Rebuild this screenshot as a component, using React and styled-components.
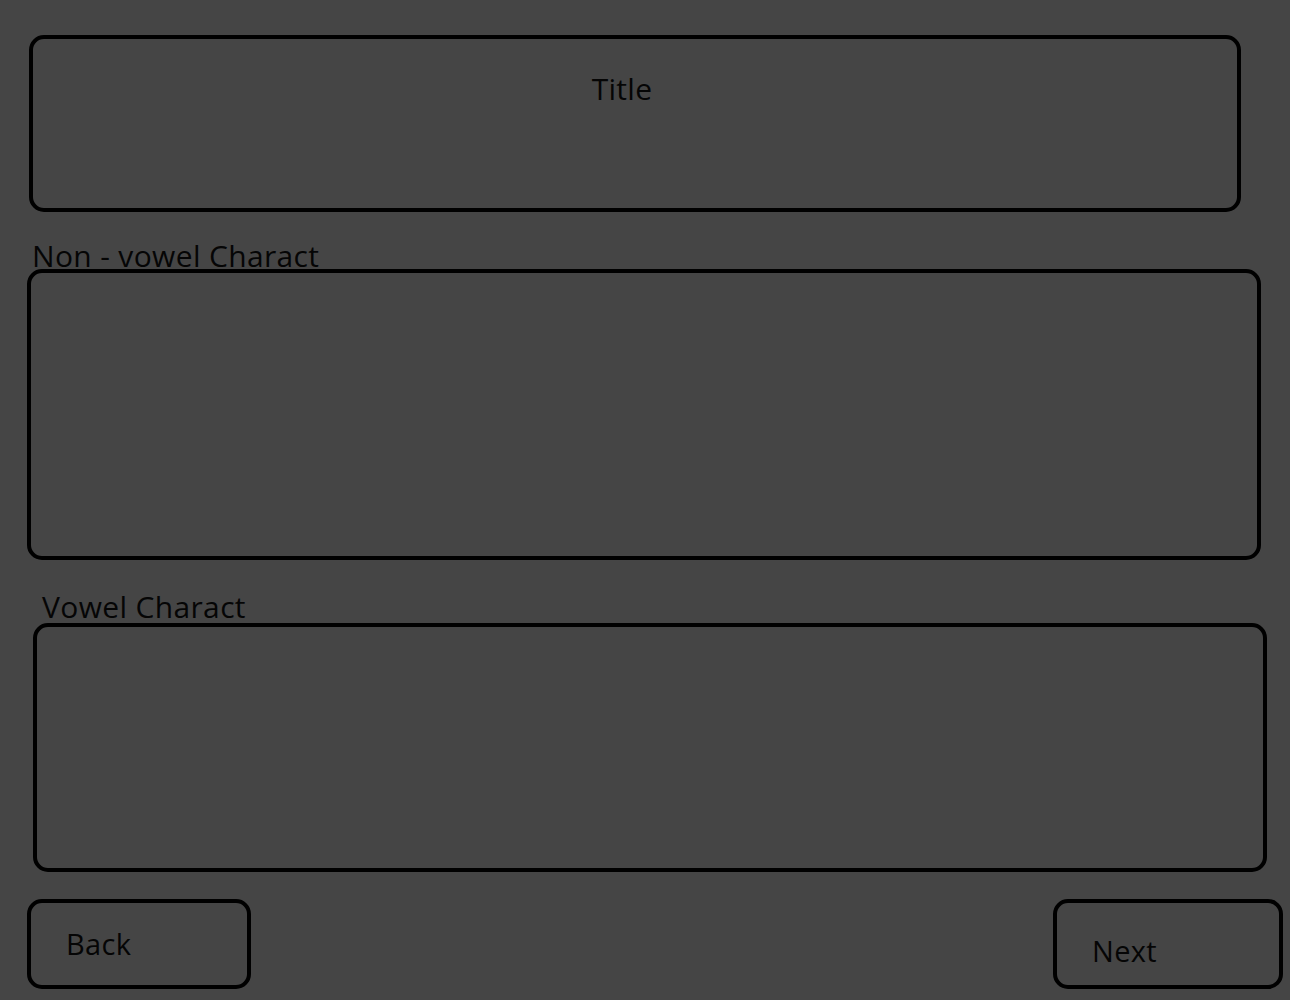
import styled, { createGlobalStyle } from "styled-components";

const GlobalStyle = createGlobalStyle`
  html, body {
    margin: 0;
    padding: 0;
    background: #454545;
  }
  body {
    font-family: "Open Sans", "Noto Sans", sans-serif;
    color: #050505;
  }
`;

const Page = styled.div`
  width: 1290px;
  height: 1000px;
  display: flex;
  flex-direction: column;
  box-sizing: border-box;
  padding-top: 35px;
  overflow: hidden;
`;

const Panel = styled.div`
  box-sizing: border-box;
  border: 4px solid #000;
  border-radius: 15px;
  height: ${(p) => p.h}px;
  margin: ${(p) => p.m || "0"};
`;

const TitleBox = styled(Panel)`
  display: flex;
  justify-content: center;
  padding-right: 26px;
`;

const TitleText = styled.div`
  font-size: 30px;
  line-height: 28px;
  letter-spacing: 0.3px;
  margin-top: 36px;
`;

const Label = styled.div`
  font-size: 30px;
  line-height: 28px;
  height: 28px;
  letter-spacing: 0.35px;
  white-space: nowrap;
  margin: ${(p) => p.m || "0"};
`;

const ButtonRow = styled.div`
  display: flex;
  justify-content: space-between;
  margin-top: 27px;
  padding: 0 7px 0 27px;
`;

const Button = styled.div`
  box-sizing: border-box;
  border: 4px solid #000;
  border-radius: 15px;
  width: ${(p) => p.w}px;
  height: 90px;
  font-size: 29px;
  line-height: 28px;
  letter-spacing: 0.3px;
  padding: ${(p) => p.pad};
`;

export default function App() {
  return (
    <>
      <GlobalStyle />
      <Page>
        <TitleBox h={177} m="0 49px 0 29px">
          <TitleText>Title</TitleText>
        </TitleBox>
        <Label m="30px 0 -1px 32px">Non - vowel Charact</Label>
        <Panel h={291} m="0 29px 0 27px" />
        <Label m="33px 0 2px 42px">Vowel Charact</Label>
        <Panel h={249} m="0 23px 0 33px" />
        <ButtonRow>
          <Button w={224} pad="27px 0 0 35px">Back</Button>
          <Button w={230} pad="34px 0 0 35px">Next</Button>
        </ButtonRow>
      </Page>
    </>
  );
}
